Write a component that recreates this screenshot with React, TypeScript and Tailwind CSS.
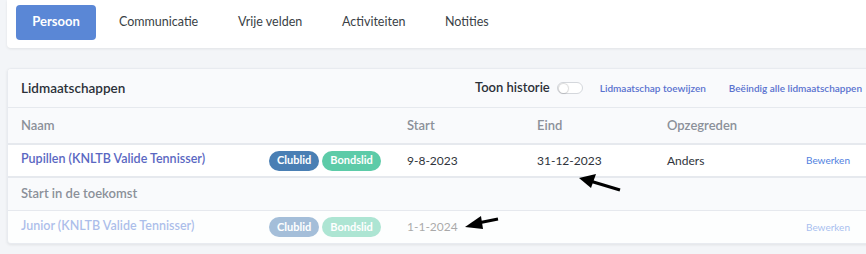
const font = { fontFamily: "Lato, 'Noto Sans', sans-serif" };

const tabs = ["Communicatie", "Vrije velden", "Activiteiten", "Notities"];

const Badges = () => (
  <div className="flex items-center gap-[3px]">
    <span className="rounded-full bg-[#4a7fb4] px-[8px] h-[20px] flex items-center text-[11px] font-bold text-white">
      Clublid
    </span>
    <span className="rounded-full bg-[#5dcba8] px-[8px] h-[20px] flex items-center text-[11px] font-bold text-white">
      Bondslid
    </span>
  </div>
);

const cols = "grid grid-cols-[248px_138px_130px_130px_1fr_70px] items-center pl-[13px]";

export default function App() {
  return (
    <div className="relative h-[254px] w-[866px] overflow-hidden bg-[#f3f5f8]" style={font}>
      {/* tab bar */}
      <div className="ml-[7px] w-[870px] h-[48px] bg-white rounded-b-[4px] shadow-[0_1px_3px_rgba(0,0,0,0.08)] flex items-center pl-[9px] pb-[1px]">
        <button className="h-[35px] w-[80px] rounded-[4px] bg-[#5a87d6] text-white text-[13px] font-bold -mt-[3px]">
          Persoon
        </button>
        <div className="flex -mt-[3px]">
          {tabs.map((t, i) => (
            <span
              key={t}
              className={
                "text-[12.5px] text-[#3a3f46] " +
                (i === 0 ? "ml-[23px] w-[119px]" : i === 1 ? "w-[104px]" : i === 2 ? "w-[103px]" : "")
              }
            >
              {t}
            </span>
          ))}
        </div>
      </div>

      {/* memberships card */}
      <div className="mt-[20px] ml-[7px] w-[870px] bg-white rounded-[4px] shadow-[0_1px_3px_rgba(0,0,0,0.08)] border border-[#e8ebf0] overflow-hidden">
        <div className="h-[39px] bg-[#f9fafc] border-b border-[#e6e9ee] flex items-center pl-[13px] pr-[14px]">
          <span className="text-[13.5px] font-semibold text-[#2b3038]">Lidmaatschappen</span>
          <div className="ml-auto flex items-center">
            <span className="text-[13px] font-semibold text-[#2b3038]">Toon historie</span>
            <span className="ml-[7px] w-[26px] h-[12px] rounded-full border border-[#d4d7dc] bg-white flex items-center pl-[1px]">
              <span className="w-[9px] h-[9px] rounded-full bg-white shadow-[0_0_1px_1px_rgba(0,0,0,0.15)]" />
            </span>
            <span className="ml-[17px] text-[10px] font-semibold text-[#5a72cf]">Lidmaatschap toewijzen</span>
            <span className="ml-[23px] text-[10px] font-semibold text-[#5a72cf]">Beëindig alle lidmaatschappen</span>
          </div>
        </div>

        {/* table head */}
        <div className={"h-[37px] bg-[#f9fafc] border-b-2 border-[#e6e9ee] text-[13px] font-semibold text-[#8b9099] " + cols}>
          <span>Naam</span>
          <span />
          <span>Start</span>
          <span>Eind</span>
          <span>Opzegreden</span>
          <span />
        </div>

        {/* row 1 */}
        <div className={"h-[33px] bg-white border-b-2 border-[#e6e9ee] text-[12px] text-[#2f343b] " + cols}>
          <span className="text-[12.5px] font-semibold text-[#5a67c2] -mt-[3px]">Pupillen (KNLTB Valide Tennisser)</span>
          <Badges />
          <span>9-8-2023</span>
          <span>31-12-2023</span>
          <span>Anders</span>
          <span className="text-[10px] text-[#4f7fe0]">Bewerken</span>
        </div>

        {/* section */}
        <div className="h-[33px] bg-[#f9fafc] border-b border-[#e6e9ee] flex items-center pl-[13px] text-[13px] font-semibold text-[#8b9099]">
          Start in de toekomst
        </div>

        {/* row 2 */}
        <div className={"h-[32px] bg-[#fcfdfd] text-[12px] opacity-50 " + cols}>
          <span className="text-[12.5px] font-semibold text-[#5a7fd6] -mt-[2px]">Junior (KNLTB Valide Tennisser)</span>
          <Badges />
          <span className="text-[#555]">1-1-2024</span>
          <span />
          <span />
          <span className="text-[10px] text-[#4f7fe0]">Bewerken</span>
        </div>
      </div>

      {/* annotation arrows */}
      <svg className="absolute left-0 top-0 pointer-events-none" width="866" height="254">
        <line x1="620" y1="190" x2="590" y2="181" stroke="#000" strokeWidth="3" />
        <polygon points="579,178 596,174 591,188" fill="#000" />
        <line x1="498" y1="219" x2="478" y2="223" stroke="#000" strokeWidth="3" />
        <polygon points="465,227 481,216 483,229" fill="#000" />
      </svg>
    </div>
  );
}
